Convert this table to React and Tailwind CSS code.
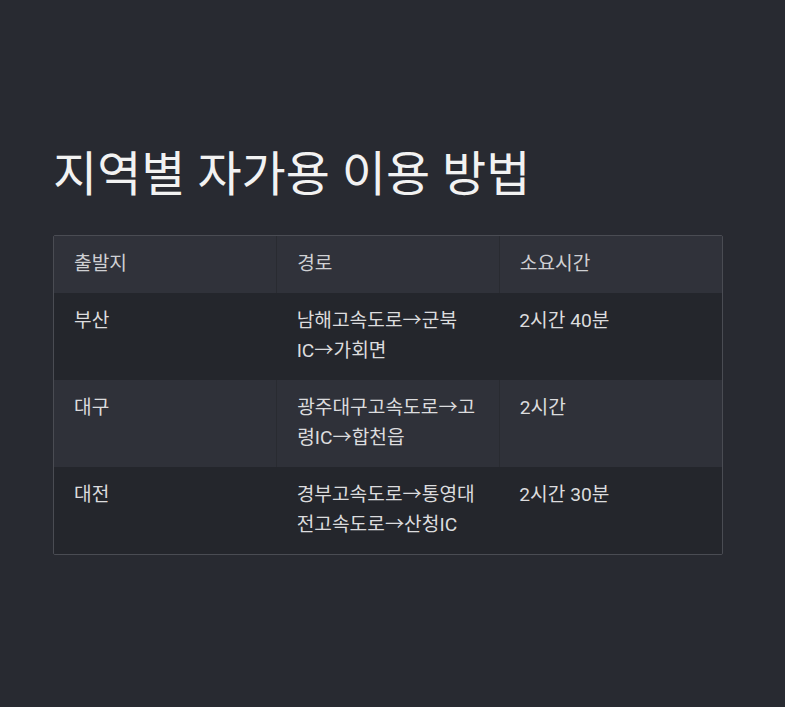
import React from 'react';

const rows = [
  { from: '부산', route: '남해고속도로→군북IC→가회면', time: '2시간 40분' },
  { from: '대구', route: '광주대구고속도로→고령IC→합천읍', time: '2시간' },
  { from: '대전', route: '경부고속도로→통영대전고속도로→산청IC', time: '2시간 30분' },
];

const cell = 'align-top text-left font-normal pl-5 pr-[23px] pt-[13px] pb-[14px]';

export default function App() {
  return (
    <div className="min-h-[707px] bg-[#282a31] px-[53px] pt-[145px] pb-10 [font-family:Roboto,'Noto_Sans_CJK_KR',sans-serif]">
      <h1 className="text-[48px] leading-[60px] text-[#f2f2f2] font-normal">
        지역별 자가용 이용 방법
      </h1>

      <div className="mt-[30px] w-[670px] border border-[#4a4c53] rounded-[2px] overflow-hidden">
        <table className="w-full table-fixed border-collapse text-[19.2px] leading-[30px]">
          <thead>
            <tr className="bg-[#30323a] text-[#cfd0d3]">
              <th className={cell + ' w-1/3 border-r border-[#292b31]'}>출발지</th>
              <th className={cell + ' w-1/3 border-r border-[#292b31]'}>경로</th>
              <th className={cell + ' w-1/3'}>소요시간</th>
            </tr>
          </thead>
          <tbody>
            {rows.map((r, i) => (
              <tr key={i} className={i % 2 === 1 ? 'bg-[#2f3139] text-[#dcdcde]' : 'bg-[#24262c] text-[#dcdcde]'}>
                <td className={cell + (i % 2 === 1 ? ' border-r border-[#292b31]' : '')}>{r.from}</td>
                <td className={cell + (i % 2 === 1 ? ' border-r border-[#292b31]' : '')}>{r.route}</td>
                <td className={cell}>{r.time}</td>
              </tr>
            ))}
          </tbody>
        </table>
      </div>
    </div>
  );
}
